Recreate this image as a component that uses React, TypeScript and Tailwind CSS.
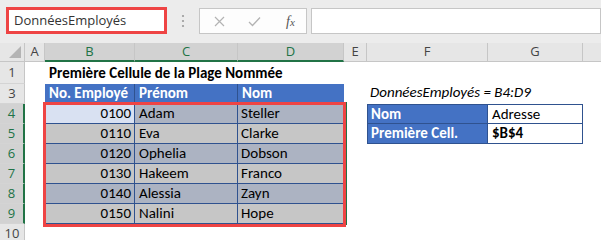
import React from "react";

const cellFont = { fontFamily: "Carlito, Lato, 'Liberation Sans', sans-serif" };
const uiFont = { fontFamily: "'Open Sans', 'Noto Sans', sans-serif" };

function RowHead({ n, sel }: { n: string; sel?: boolean }) {
  return (
    <div
      className={
        "flex items-center justify-center text-[13px] border-b border-[#d4d4d4] " +
        (sel
          ? "bg-[#d2d2d2] text-[#217346] border-r-2 border-r-[#217346]"
          : "bg-[#e6e6e6] text-[#444] border-r border-r-[#c6c6c6]")
      }
      style={uiFont}
    >
      {n}
    </div>
  );
}

function ColHead({ l, sel, last }: { l: string; sel?: boolean; last?: boolean }) {
  return (
    <div
      className={
        "flex items-center justify-center text-[13px] " +
        (last ? "" : "border-r border-r-[#c6c6c6] ") +
        (sel
          ? "bg-[#d2d2d2] text-[#217346] border-b-2 border-b-[#217346]"
          : "bg-[#e6e6e6] text-[#444] border-b border-b-[#c6c6c6]")
      }
      style={uiFont}
    >
      {l}
    </div>
  );
}

function Blank() {
  return <div className="bg-white" />;
}

const rows = [
  { n: "4", id: "0100", first: "Adam", last: "Steller" },
  { n: "5", id: "0110", first: "Eva", last: "Clarke" },
  { n: "6", id: "0120", first: "Ophelia", last: "Dobson" },
  { n: "7", id: "0130", first: "Hakeem", last: "Franco" },
  { n: "8", id: "0140", first: "Alessia", last: "Zayn" },
  { n: "9", id: "0150", first: "Nalini", last: "Hope" },
];

export default function App() {
  return (
    <div className="w-[601px] h-[240px] overflow-hidden bg-white relative">
      {/* Formula bar */}
      <div className="h-[43px] bg-[#ececec] flex items-start pt-[7px] pl-[6px]">
        <div
          className="w-[161px] h-[27px] border-[3px] border-[#ee4444] bg-white flex items-center pl-[5px] text-[13px] text-[#333]"
          style={uiFont}
        >
          DonnéesEmployés
        </div>
        <div className="w-[32px] h-[27px] flex items-center justify-center">
          <svg width="4" height="14" viewBox="0 0 4 14">
            <circle cx="2" cy="2" r="1.1" fill="#9a9a9a" />
            <circle cx="2" cy="7" r="1.1" fill="#9a9a9a" />
            <circle cx="2" cy="12" r="1.1" fill="#9a9a9a" />
          </svg>
        </div>
        <div className="w-[108px] h-[26px] mt-[1px] bg-[#fdfdfd] border border-[#c6c6c6] flex items-center">
          <div className="w-[36px] flex justify-center pl-[2px]">
            <svg width="11" height="11" viewBox="0 0 11 11">
              <path d="M1 1 L10 10 M10 1 L1 10" stroke="#b3b3b3" strokeWidth="1.2" fill="none" />
            </svg>
          </div>
          <div className="w-[36px] flex justify-center">
            <svg width="13" height="11" viewBox="0 0 13 11">
              <path d="M1 6 L4.5 9.5 L12 1.5" stroke="#b3b3b3" strokeWidth="1.3" fill="none" />
            </svg>
          </div>
          <div
            className="w-[34px] flex justify-center pl-[3px] text-[14px] italic text-[#555]"
            style={{ fontFamily: "'Liberation Serif', serif" }}
          >
            f<span className="text-[11px] mt-[3px]">x</span>
          </div>
        </div>
        <div className="ml-[4px] flex-1 h-[26px] mt-[1px] bg-white border border-[#c6c6c6]" />
      </div>

      {/* Sheet */}
      <div className="relative">
        <div className="grid grid-cols-[25px_20px_90px_103px_106px_23px_121px_95px_1fr] grid-rows-[19px_22px_20px_20px_20px_20px_20px_20px_20px_20px]">
          {/* header row */}
          <div className="bg-[#e6e6e6] border-r border-r-[#c6c6c6] border-b border-b-[#c6c6c6] flex items-end justify-end pr-[3px] pb-[3px]">
            <svg width="12" height="12" viewBox="0 0 12 12">
              <polygon points="12,0 12,12 0,12" fill="#b4b4b4" />
            </svg>
          </div>
          <ColHead l="A" />
          <ColHead l="B" sel />
          <ColHead l="C" sel />
          <ColHead l="D" sel />
          <ColHead l="E" />
          <ColHead l="F" />
          <ColHead l="G" />
          <ColHead l="" last />

          {/* row 1 */}
          <RowHead n="1" />
          <Blank />
          <div
            className="col-span-3 bg-white flex items-center pl-[4px] font-bold text-[15px] text-black whitespace-nowrap overflow-visible"
            style={cellFont}
          >
            Première Cellule de la Plage Nommée
          </div>
          <Blank />
          <Blank />
          <Blank />
          <Blank />

          {/* row 3 */}
          <RowHead n="3" />
          <Blank />
          {["No. Employé", "Prénom", "Nom"].map((t, i) => (
            <div
              key={t}
              className={
                "bg-[#4472c4] text-white font-bold text-[15px] flex items-center pl-[4px] border-b border-b-[#2f528f] " +
                (i < 2 ? "border-r border-r-[#2f528f]" : "")
              }
              style={cellFont}
            >
              {t}
            </div>
          ))}
          <Blank />
          <div
            className="col-span-3 bg-white flex items-end pb-[1px] pl-[3px] italic text-[15px] text-black whitespace-nowrap"
            style={cellFont}
          >
            DonnéesEmployés = B4:D9
          </div>

          {rows.map((r, idx) => {
            const odd = idx % 2 === 0;
            const bg = odd ? "bg-[#acb3c2]" : "bg-[#c6c6c6]";
            const bBg = idx === 0 ? "bg-[#d9e1f2]" : bg;
            return (
              <React.Fragment key={r.n}>
                <RowHead n={r.n} sel />
                <Blank />
                <div
                  className={bBg + " border-r border-r-[#2f528f] border-b border-b-[#2f528f] flex items-center justify-end pr-[3px] text-[15px] text-black"}
                  style={cellFont}
                >
                  {r.id}
                </div>
                <div
                  className={bg + " border-r border-r-[#2f528f] border-b border-b-[#2f528f] flex items-center pl-[4px] text-[15px] text-black"}
                  style={cellFont}
                >
                  {r.first}
                </div>
                <div
                  className={bg + " border-b border-b-[#2f528f] flex items-center pl-[3px] text-[15px] text-black"}
                  style={cellFont}
                >
                  {r.last}
                </div>
                <Blank />
                {idx === 0 ? (
                  <>
                    <div
                      className="bg-[#4472c4] text-white font-bold text-[15px] flex items-center pl-[3px] border border-[#2f528f]"
                      style={cellFont}
                    >
                      Nom
                    </div>
                    <div
                      className="bg-white text-black text-[15px] flex items-center pl-[4px] border-t border-r border-b border-[#2f528f]"
                      style={cellFont}
                    >
                      Adresse
                    </div>
                  </>
                ) : idx === 1 ? (
                  <>
                    <div
                      className="bg-[#4472c4] text-white font-bold text-[15px] flex items-center pl-[3px] border-l border-r border-b border-[#2f528f]"
                      style={cellFont}
                    >
                      Première Cell.
                    </div>
                    <div
                      className="bg-white text-black font-bold text-[15px] flex items-center pl-[4px] border-r border-b border-[#2f528f]"
                      style={cellFont}
                    >
                      $B$4
                    </div>
                  </>
                ) : (
                  <>
                    <Blank />
                    <Blank />
                  </>
                )}
                <Blank />
              </React.Fragment>
            );
          })}

          {/* row 10 */}
          <RowHead n="10" />
          <Blank />
          <Blank />
          <Blank />
          <Blank />
          <Blank />
          <Blank />
          <Blank />
          <Blank />
        </div>

        {/* Excel selection edge + red annotation */}
        <div className="absolute left-[344px] top-[59px] w-[3px] h-[123px] bg-[#217346]" />
        <div className="absolute left-[43px] top-[59px] w-[303px] h-[125px] border-[3px] border-[#ee4444]" />
      </div>
    </div>
  );
}
